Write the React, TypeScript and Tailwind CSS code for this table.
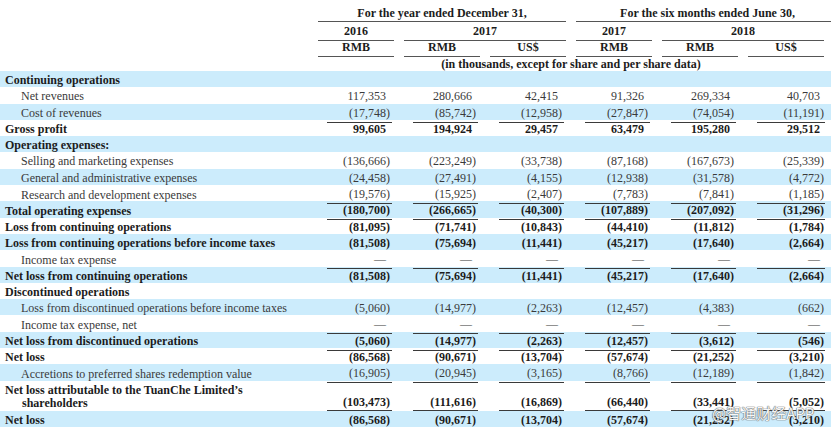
import React from "react";

type R = {
  label: React.ReactNode;
  v?: string[];
  b?: boolean;
  ind?: boolean;
  blue?: boolean;
  line?: boolean;
  dbl?: boolean;
};

const DASH = ["—", "—", "—", "—", "—", "—"];

const rows: R[] = [
  { label: "Continuing operations", b: true, blue: true },
  { label: "Net revenues", ind: true, v: ["117,353", "280,666", "42,415", "91,326", "269,334", "40,703"] },
  { label: "Cost of revenues", ind: true, blue: true, line: true, v: ["(17,748)", "(85,742)", "(12,958)", "(27,847)", "(74,054)", "(11,191)"] },
  { label: "Gross profit", b: true, v: ["99,605", "194,924", "29,457", "63,479", "195,280", "29,512"] },
  { label: "Operating expenses:", b: true, blue: true },
  { label: "Selling and marketing expenses", ind: true, v: ["(136,666)", "(223,249)", "(33,738)", "(87,168)", "(167,673)", "(25,339)"] },
  { label: "General and administrative expenses", ind: true, blue: true, v: ["(24,458)", "(27,491)", "(4,155)", "(12,938)", "(31,578)", "(4,772)"] },
  { label: "Research and development expenses", ind: true, line: true, v: ["(19,576)", "(15,925)", "(2,407)", "(7,783)", "(7,841)", "(1,185)"] },
  { label: "Total operating expenses", b: true, blue: true, line: true, v: ["(180,700)", "(266,665)", "(40,300)", "(107,889)", "(207,092)", "(31,296)"] },
  { label: "Loss from continuing operations", b: true, v: ["(81,095)", "(71,741)", "(10,843)", "(44,410)", "(11,812)", "(1,784)"] },
  { label: "Loss from continuing operations before income taxes", b: true, blue: true, v: ["(81,508)", "(75,694)", "(11,441)", "(45,217)", "(17,640)", "(2,664)"] },
  { label: "Income tax expense", ind: true, line: true, v: DASH },
  { label: "Net loss from continuing operations", b: true, blue: true, v: ["(81,508)", "(75,694)", "(11,441)", "(45,217)", "(17,640)", "(2,664)"] },
  { label: "Discontinued operations", b: true },
  { label: "Loss from discontinued operations before income taxes", ind: true, blue: true, v: ["(5,060)", "(14,977)", "(2,263)", "(12,457)", "(4,383)", "(662)"] },
  { label: "Income tax expense, net", ind: true, line: true, v: DASH },
  { label: "Net loss from discontinued operations", b: true, blue: true, line: true, v: ["(5,060)", "(14,977)", "(2,263)", "(12,457)", "(3,612)", "(546)"] },
  { label: "Net loss", b: true, v: ["(86,568)", "(90,671)", "(13,704)", "(57,674)", "(21,252)", "(3,210)"] },
  { label: "Accretions to preferred shares redemption value", ind: true, blue: true, line: true, v: ["(16,905)", "(20,945)", "(3,165)", "(8,766)", "(12,189)", "(1,842)"] },
  {
    label: (
      <>
        <div>Net loss attributable to the TuanChe Limited’s</div>
        <div className="pl-[17px]">shareholders</div>
      </>
    ),
    b: true,
    dbl: true,
    line: true,
    v: ["(103,473)", "(111,616)", "(16,869)", "(66,440)", "(33,441)", "(5,052)"],
  },
  { label: "Net loss", b: true, blue: true, v: ["(86,568)", "(90,671)", "(13,704)", "(57,674)", "(21,252)", "(3,210)"] },
];

const GRID = "grid grid-cols-[308px_repeat(6,76px)] gap-x-[10px]";

function Num({ s, line, last, dbl }: { s: string; line?: boolean; last: boolean; dbl?: boolean }) {
  const neg = s.startsWith("(");
  return (
    <div
      className={`flex h-full justify-end ml-[9px] ${dbl ? "items-end pb-[1px]" : "items-center"} ${
        last ? "mr-[-1px] pr-[1px]" : "mr-[2px] pr-[2px]"
      } ${line ? "border-b border-[#3a3a3a]" : ""}`}
    >
      <span className={dbl ? "leading-[13px]" : ""}>{s}</span>
      {!neg && <span className={`invisible ${dbl ? "leading-[13px]" : ""}`}>)</span>}
    </div>
  );
}

function Row({ r }: { r: R }) {
  const color = r.b ? "font-bold text-[#1c1c1c]" : "text-[#3a3a3a]";
  return (
    <div className={`${GRID} ${r.dbl ? "h-[30px]" : "h-[16.3px]"} ${r.blue ? "bg-[#ccecfc]" : "bg-white"} ${color}`}>
      <div
        className={`${r.ind ? "pl-[21px]" : "pl-[5px]"} ${
          r.dbl ? "pt-[3px] leading-[13px] whitespace-nowrap" : "flex items-center whitespace-nowrap"
        }`}
      >
        {r.label}
      </div>
      {r.v
        ? r.v.map((s, i) => <Num key={i} s={s} line={r.line} last={i === 5} dbl={r.dbl} />)
        : null}
    </div>
  );
}

export default function App() {
  return (
    <div className="relative w-[831px] h-[429px] overflow-hidden bg-white font-['Liberation_Serif',serif] text-[12px] text-[#1c1c1c]">
      {/* header */}
      <div className="pt-[5px] font-bold text-[#1c1c1c]">
        <div className={`${GRID} h-[17px]`}>
          <div className="col-start-2 col-span-3 border-b border-[#555] flex items-center justify-center leading-[16px]">
            For the year ended December 31,
          </div>
          <div className="col-span-3 border-b border-[#555] mr-[-7px] pl-[8px] flex items-center justify-center leading-[16px]">
            For the six months ended June 30,
          </div>
        </div>
        <div className={`${GRID} h-[16px]`}>
          <div className="col-start-2 border-b border-[#555] flex items-center justify-center">2016</div>
          <div className="col-span-2 border-b border-[#555] flex items-center justify-center">2017</div>
          <div className="border-b border-[#555] flex items-center justify-center">2017</div>
          <div className="col-span-2 border-b border-[#555] flex items-center justify-center">2018</div>
        </div>
        <div className={`${GRID} h-[17px]`}>
          <div className="col-start-2 border-b border-[#555] flex items-center justify-center">RMB</div>
          <div className="border-b border-[#555] flex items-center justify-center">RMB</div>
          <div className="border-b border-[#555] flex items-center justify-center">US$</div>
          <div className="border-b border-[#555] flex items-center justify-center">RMB</div>
          <div className="border-b border-[#555] flex items-center justify-center">RMB</div>
          <div className="border-b border-[#555] flex items-center justify-center">US$</div>
        </div>
        <div className={`${GRID} h-[16px]`}>
          <div className="col-start-2 col-span-6 flex items-center justify-center">
            (in thousands, except for share and per share data)
          </div>
        </div>
      </div>

      {/* body */}
      <div>
        {rows.map((r, i) => (
          <Row key={i} r={r} />
        ))}
      </div>

      {/* watermark */}
      <div className="absolute left-[712px] top-[404px] text-[15px] leading-[18px] font-['Noto_Sans_CJK_SC',sans-serif] text-[#f6f6f6] [text-shadow:0_0_1px_#666,0_0_1px_#666,0_0_1px_#888] whitespace-nowrap">
        @智通财经APP
      </div>
    </div>
  );
}
